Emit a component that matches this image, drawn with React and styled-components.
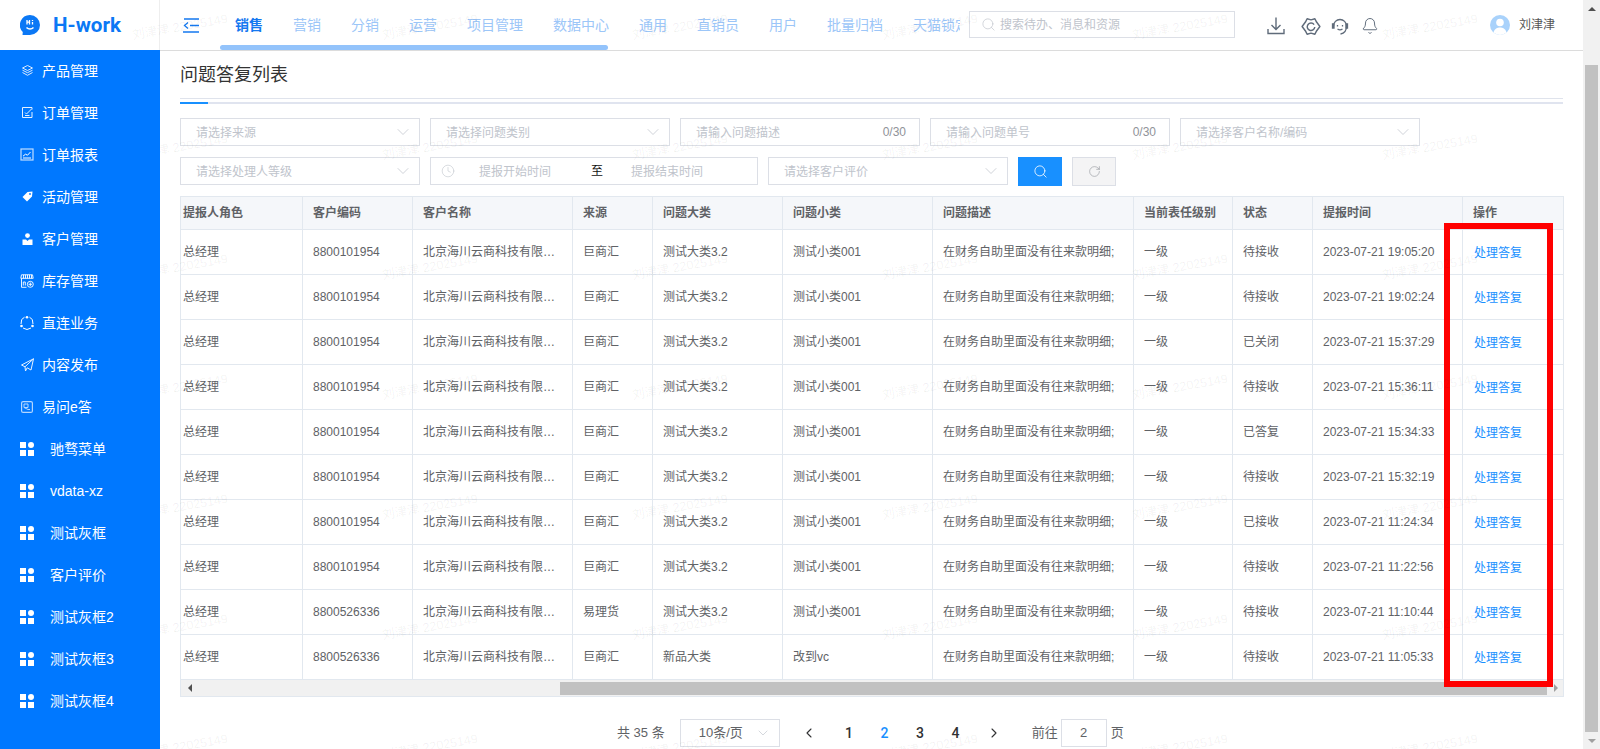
import React from 'react';
import styled, { createGlobalStyle } from 'styled-components';
import { Bell, Search, RotateCw, Clock, ChevronDown, ChevronLeft, ChevronRight } from 'lucide-react';

const GlobalStyle = createGlobalStyle`
  html, body {
    margin: 0;
    height: 100%;
    overflow: hidden;
    background: #fff;
    font-family: "Liberation Sans", "Noto Sans CJK SC", sans-serif;
    font-size: 12px;
    line-height: 16px;
    color: #606266;
  }
  * { box-sizing: border-box; }
`;

const Shell = styled.div`
  position: relative;
  display: flex;
  height: 749px;
  overflow: hidden;
`;

const Side = styled.aside`
  width: 160px;
  flex: none;
  display: flex;
  flex-direction: column;
`;

const Logo = styled.div`
  height: 50px;
  display: flex;
  align-items: center;
  padding-left: 20px;
  gap: 13px;
  background: #fff;
  color: #0b78f5;
  font: 700 20.6px Roboto, "Liberation Sans", sans-serif;
  box-shadow: inset -1px 0 0 #eee;
`;

const Menu = styled.nav`
  position: relative;
  z-index: 2;
  flex: 1;
  background: #0078ff;
`;

const MenuItem = styled.div`
  height: 42px;
  display: flex;
  align-items: center;
  padding: 0 0 1px 20px;
  color: #fff;
  font-size: 14px;
  span { margin-left: ${(p) => (p.$grid ? 16 : 8)}px; }
`;

const MenuIcon = styled.div`
  width: 14px;
  height: 14px;
  flex: none;
  display: flex;
  align-items: center;
  justify-content: center;
  opacity: ${(p) => p.$dim || 1};
`;

const Main = styled.div`
  flex: 1;
  min-width: 0;
  display: flex;
  flex-direction: column;
`;

const Header = styled.header`
  height: 51px;
  flex: none;
  display: flex;
  align-items: flex-start;
  padding-left: 23px;
  background: #fff;
  border-bottom: 1px solid #dcdcdc;
`;

const Collapse = styled.div`
  width: 16px;
  height: 50px;
  display: flex;
  align-items: center;
  margin-right: 21px;
`;

const TabsWrap = styled.div`
  width: 740px;
  flex: none;
`;

const TabRow = styled.div`
  height: 45px;
  display: flex;
  overflow: hidden;
  padding-top: 5px;
`;

const Tab = styled.div`
  flex: none;
  display: flex;
  align-items: center;
  padding: 0 15px;
  font-size: 14px;
  font-weight: ${(p) => (p.$active ? 700 : 400)};
  color: ${(p) => (p.$active ? '#1478f0' : '#9cc6f8')};
`;

const TabBar = styled.div`
  width: 388px;
  height: 5px;
  background: #93c3fb;
  border-radius: 3px;
`;

const HeaderSearch = styled.div`
  width: 266px;
  height: 27px;
  margin: 11px 0 0 9px;
  flex: none;
  display: flex;
  align-items: center;
  gap: 4px;
  padding-left: 11px;
  border: 1px solid #dcdfe6;
  color: #c0c4cc;
`;

const HeaderIcons = styled.div`
  height: 50px;
  display: flex;
  align-items: center;
  margin-left: 31px;
  padding-top: 2px;
  color: #5f6b7a;
`;

const HeaderIcon = styled.div`
  width: 20px;
  height: 20px;
  display: flex;
  align-items: center;
  justify-content: center;
  margin-left: ${(p) => p.$left || 0}px;
`;

const User = styled.div`
  height: 50px;
  display: flex;
  align-items: center;
  gap: 9px;
  margin-left: auto;
  padding-right: 28px;
  color: #555;
  white-space: nowrap;
`;

const Content = styled.main`
  flex: 1;
  padding: 0 20px;
`;

const TitleBar = styled.div`
  height: 48px;
  display: flex;
  align-items: center;
  border-bottom: 1px solid #dfe3ec;
  font-size: 18px;
  color: #333;
`;

const Rule = styled.div`
  height: 2px;
  margin-top: 3px;
  background: #e0e4ef;
  &::before {
    content: '';
    display: block;
    width: 28px;
    height: 2px;
    background: #1890ff;
  }
`;

const FilterRow = styled.div`
  display: flex;
  gap: 10px;
  margin-top: ${(p) => p.$top}px;
`;

const Field = styled.div`
  width: ${(p) => p.$width || 240}px;
  height: 28px;
  flex: none;
  display: flex;
  align-items: center;
  justify-content: space-between;
  padding: 0 13px 0 15px;
  border: 1px solid #dcdfe6;
  color: #c0c4cc;
  svg { color: #c0c4cc; }
`;

const FieldLabel = styled.span`
  margin-top: 2px;
`;

const FieldChevron = styled(ChevronDown)`
  margin-right: -7px;
`;

const Count = styled.span`
  color: #909399;
`;

const DateField = styled(Field)`
  justify-content: flex-start;
  padding: 0 0 0 10px;
`;

const DateHint = styled.span`
  width: 72px;
  margin: 2px 0 0 ${(p) => p.$left}px;
`;

const DateSep = styled.span`
  margin-left: 40px;
  color: #111;
`;

const IconButton = styled.button`
  width: 44px;
  height: 29px;
  flex: none;
  padding: 0;
  display: flex;
  align-items: center;
  justify-content: center;
  border: 1px solid ${(p) => (p.$primary ? '#1890ff' : '#dcdfe6')};
  background: ${(p) => (p.$primary ? '#1890ff' : '#f4f4f5')};
  color: ${(p) => (p.$primary ? '#fff' : '#909399')};
`;

const TableWrap = styled.div`
  position: relative;
  width: 1384px;
  margin-top: 10px;
  border-top: 1px solid #e2e8ef;
  border-left: 1px solid #e2e8ef;
`;

const Table = styled.table`
  width: 1383px;
  table-layout: fixed;
  border-collapse: separate;
  border-spacing: 0;
`;

const Th = styled.th`
  height: 33px;
  padding: 0 0 0 ${(p) => (p.$first ? 2 : 10)}px;
  text-align: left;
  font-weight: 700;
  color: #606266;
  background: #f5f7fa;
  border-right: 1px solid #e2e8ef;
  border-bottom: 1px solid #e2e8ef;
  white-space: nowrap;
`;

const Td = styled.td`
  height: 45px;
  padding: 0 10px 0 ${(p) => (p.$first ? 2 : 10)}px;
  color: #606266;
  border-right: 1px solid #e2e8ef;
  border-bottom: 1px solid #e2e8ef;
  white-space: nowrap;
  overflow: hidden;
  text-overflow: ellipsis;
`;

const ActionLink = styled.a`
  display: block;
  padding-left: 1px;
  margin-top: ${(p) => (p.$low ? 2 : 1)}px;
  color: #1890ff;
`;

const HBar = styled.div`
  height: 17px;
  display: flex;
  align-items: center;
  background: #f1f1f1;
  border-right: 1px solid #e2e8ef;
  border-bottom: 1px solid #e2e8ef;
  color: #505050;
`;

const opposite = { left: 'right', right: 'left', top: 'bottom', bottom: 'top' };

const Arrow = styled.div`
  width: 17px;
  flex: none;
  display: flex;
  justify-content: center;
  align-items: center;
  &::before {
    content: '';
    border: 4px solid transparent;
    ${(p) => `border-${p.$side}-color: ${p.$color || '#505050'};`}
    ${(p) => `border-${opposite[p.$side]}-width: 0;`}
  }
`;

const HTrack = styled.div`
  flex: 1;
  height: 13px;
`;

const HThumb = styled.div`
  width: 987px;
  height: 13px;
  margin-left: 362px;
  background: #c1c1c1;
`;

const RedBox = styled.div`
  position: absolute;
  top: 26px;
  left: 1263px;
  width: 109px;
  height: 464px;
  border: 6px solid #ff0000;
`;

const Pager = styled.div`
  display: flex;
  align-items: center;
  height: 28px;
  margin-top: 22px;
  padding-left: 437px;
  font-size: 13px;
  color: #606266;
`;

const PageSize = styled.div`
  width: 100px;
  height: 28px;
  margin-left: 15px;
  margin-right: 12px;
  display: flex;
  align-items: center;
  justify-content: space-between;
  padding: 0 8px 0 18px;
  border: 1px solid #dcdfe6;
  svg { color: #c0c4cc; }
`;

const PageBtn = styled.div`
  width: 35.5px;
  height: 28px;
  display: flex;
  align-items: center;
  justify-content: center;
  font: 500 14px Roboto, "Liberation Sans", sans-serif;
  color: ${(p) => (p.$active ? '#1890ff' : '#303133')};
`;

const PageArrow = styled(PageBtn)`
  margin: ${(p) => p.$margin};
`;

const Jump = styled.span`
  margin-left: ${(p) => p.$left}px;
`;

const JumpInput = styled.div`
  width: 46px;
  height: 28px;
  margin: 0 4px 0 3px;
  display: flex;
  align-items: center;
  justify-content: center;
  border: 1px solid #dcdfe6;
`;

const VBar = styled.div`
  width: 17px;
  flex: none;
  display: flex;
  flex-direction: column;
  align-items: center;
  background: #f1f1f1;
`;

const VArrow = styled(Arrow)`
  height: 17px;
`;

const VTrack = styled.div`
  flex: 1;
  width: 13px;
  padding-top: 48px;
`;

const VThumb = styled.div`
  height: 667px;
  background: #c1c1c1;
`;

const Watermarks = styled.div`
  position: absolute;
  z-index: 1;
  top: -33px;
  left: 55px;
  display: grid;
  grid-template-columns: repeat(6, 250px);
  grid-auto-rows: 120px;
  pointer-events: none;
`;

const Mark = styled.div`
  display: flex;
  align-items: center;
  justify-content: center;
  color: rgba(0, 0, 0, 0.06);
  font-size: 12.5px;
  white-space: nowrap;
  transform: rotate(-10deg);
`;

const GridIcon = () => (
  <svg width="14" height="14" viewBox="0 0 14 14" fill="#fff">
    <rect x="0" y="0" width="6" height="6" />
    <circle cx="11" cy="3" r="3" />
    <rect x="0" y="8" width="6" height="6" />
    <rect x="8" y="8" width="6" height="6" />
  </svg>
);

const line = { fill: 'none', stroke: '#fff', strokeWidth: 1 };

const menuItems = [
  {
    label: '产品管理',
    dim: 0.85,
    icon: (
      <svg width="11" height="11" viewBox="0 0 11 11" {...line}>
        <path d="M5.500 .5L10.500 3 5.500 5.500 .5 3z" />
        <path d="M.5 5.200l5 2.500 5-2.500M.5 7.500l5 2.800 5-2.800" />
      </svg>
    ),
  },
  {
    label: '订单管理',
    icon: (
      <svg width="11" height="11" viewBox="0 0 11 11" {...line} opacity="0.9">
        <path d="M10 2.500V.5H.5v10H10V5" />
        <path d="M3 5.500l1.500 1.500L9.500 2M3 8.500h4.500" />
      </svg>
    ),
  },
  {
    label: '订单报表',
    icon: (
      <svg width="14" height="13" viewBox="0 0 14 13" {...line}>
        <rect x="1" y="1" width="12" height="11" opacity="0.75" strokeWidth="1.2" />
        <path d="M3 8.200l2.500-2 2 1L10.500 4M3 10h8" />
      </svg>
    ),
  },
  {
    label: '活动管理',
    icon: (
      <svg width="11" height="11" viewBox="0 0 11 11" fill="#fff">
        <path d="M5.500 1L10.500.5 10 5.500 5 10.500 .5 6z" />
        <circle cx="8" cy="3" r="0.9" fill="#0078ff" />
      </svg>
    ),
  },
  {
    label: '客户管理',
    icon: (
      <svg width="11" height="12" viewBox="0 0 11 12" fill="#fff">
        <circle cx="5.500" cy="2.600" r="2.400" />
        <path d="M.5 6.500h3.500L5.500 8 7 6.500h3.500V12H.5z" />
      </svg>
    ),
  },
  {
    label: '库存管理',
    icon: (
      <svg width="14" height="14" viewBox="0 0 14 14" {...line} strokeWidth="0.9">
        <path d="M1.500 .8h11l.7 3.500H.8zM1.500 4.300v9h5M3.500 .8v3.500M5.500 .8v3.500M7.500 .8v3.500M9.500 .8v3.500M11.500 .8v3.500" />
        <path d="M3.300 11.500V8h2v3.500" />
        <circle cx="10.300" cy="10.300" r="3" />
        <path d="M8.500 10.300h3.600M10.300 8.500v3.600" />
      </svg>
    ),
  },
  {
    label: '直连业务',
    icon: (
      <svg width="14" height="14" viewBox="0 0 14 14" {...line}>
        <path d="M4.500 1.200L1.700 3.500 1 8" />
        <path d="M9.500 1.200L12.300 3.500 13 8" />
        <path d="M3 12l4 1.500 4-1.500" />
        <g fill="#fff" stroke="none">
          <circle cx="7" cy="1.300" r="1.300" />
          <circle cx="1.500" cy="10" r="1.300" />
          <circle cx="12.500" cy="10" r="1.300" />
        </g>
      </svg>
    ),
  },
  {
    label: '内容发布',
    icon: (
      <svg width="13" height="14" viewBox="0 0 13 14" {...line} opacity="0.9">
        <path d="M12.500 .8L.5 7l3.500 1.800L12.500 .8 10 12 6.200 9.800 4.500 13 4 8.800" />
      </svg>
    ),
  },
  {
    label: '易问e答',
    dim: 0.7,
    icon: (
      <svg width="12" height="12" viewBox="0 0 12 12" {...line}>
        <rect x="0.6" y="0.6" width="10.800" height="10.800" rx="1.500" strokeWidth="1.200" />
        <path d="M3 3h4v3.500H3zM3 6.500l4 2h2" />
      </svg>
    ),
  },
  { label: '驰骛菜单', grid: true },
  { label: 'vdata-xz', grid: true },
  { label: '测试灰框', grid: true },
  { label: '客户评价', grid: true },
  { label: '测试灰框2', grid: true },
  { label: '测试灰框3', grid: true },
  { label: '测试灰框4', grid: true },
];

const tabs = ['销售', '营销', '分销', '运营', '项目管理', '数据中心', '通用', '直销员', '用户', '批量归档', '天猫锁定'];

const columns = [
  ['提报人角色', 122], ['客户编码', 110], ['客户名称', 160], ['来源', 80], ['问题大类', 130], ['问题小类', 150],
  ['问题描述', 201], ['当前表任级别', 99], ['状态', 80], ['提报时间', 150], ['操作', 101],
];

const rows = [
  ['8800101954', '巨商汇', '测试大类3.2', '测试小类001', '待接收', '2023-07-21 19:05:20'],
  ['8800101954', '巨商汇', '测试大类3.2', '测试小类001', '待接收', '2023-07-21 19:02:24'],
  ['8800101954', '巨商汇', '测试大类3.2', '测试小类001', '已关闭', '2023-07-21 15:37:29'],
  ['8800101954', '巨商汇', '测试大类3.2', '测试小类001', '待接收', '2023-07-21 15:36:11'],
  ['8800101954', '巨商汇', '测试大类3.2', '测试小类001', '已答复', '2023-07-21 15:34:33'],
  ['8800101954', '巨商汇', '测试大类3.2', '测试小类001', '待接收', '2023-07-21 15:32:19'],
  ['8800101954', '巨商汇', '测试大类3.2', '测试小类001', '已接收', '2023-07-21 11:24:34'],
  ['8800101954', '巨商汇', '测试大类3.2', '测试小类001', '待接收', '2023-07-21 11:22:56'],
  ['8800526336', '易理货', '测试大类3.2', '测试小类001', '待接收', '2023-07-21 11:10:44'],
  ['8800526336', '巨商汇', '新品大类', '改到vc', '待接收', '2023-07-21 11:05:33'],
];

const Select = ({ label }) => (
  <Field>
    <FieldLabel>{label}</FieldLabel>
    <FieldChevron size={20} strokeWidth={0.9} />
  </Field>
);

const CountInput = ({ label }) => (
  <Field>
    <FieldLabel>{label}</FieldLabel>
    <Count>0/30</Count>
  </Field>
);

const App = () => (
  <Shell>
    <GlobalStyle />
    <Side>
      <Logo>
        <svg width="20" height="21" viewBox="0 0 20 21">
          <path d="M10 0a10 10 0 0 1 0 20H2.500l.3-3A10 10 0 0 1 10 0z" fill="#0b78f5" />
          <path d="M7 5v4.500M9.500 5v4.500M7 7.200h2.500M12.500 5v1M12.500 7v2.500" stroke="#fff" strokeWidth="1.300" fill="none" />
          <path d="M6.500 12.500c2 2 5 2 7 0" stroke="#fff" strokeWidth="1.500" fill="none" />
        </svg>
        H-work
      </Logo>
      <Menu>
        {menuItems.map((item) => (
          <MenuItem key={item.label} $grid={item.grid}>
            <MenuIcon $dim={item.dim}>{item.grid ? <GridIcon /> : item.icon}</MenuIcon>
            <span>{item.label}</span>
          </MenuItem>
        ))}
      </Menu>
    </Side>

    <Main>
      <Header>
        <Collapse>
          <svg width="16" height="15" viewBox="0 0 16 15" fill="none" stroke="#1478f0" strokeWidth="1.300">
            <path d="M1 1h15M7 7.500h9M0 14h16M5 4.500L1.500 7.500 5 10.500" />
          </svg>
        </Collapse>
        <TabsWrap>
          <TabRow>
            {tabs.map((tab, i) => (
              <Tab key={tab} $active={i === 0}>{tab}</Tab>
            ))}
          </TabRow>
          <TabBar />
        </TabsWrap>
        <HeaderSearch>
          <Search size={15} strokeWidth={1.1} />
          搜索待办、消息和资源
        </HeaderSearch>
        <HeaderIcons>
          <HeaderIcon>
            <svg width="18" height="18" viewBox="0 0 18 18" fill="none" stroke="currentColor" strokeWidth="1.400">
              <path d="M9 .5v12M4.500 8L9 12.500 13.500 8M1 12v4.500h16V12" />
            </svg>
          </HeaderIcon>
          <HeaderIcon $left={15}>
            <svg width="20" height="19" viewBox="0 0 18 17" fill="none" stroke="currentColor" strokeWidth="1.300" strokeLinejoin="round">
              <path d="M5.500 1.500l3.500 1 3.500-1 1.500 3 3 4-3 4-1.500 3-3.500-1-3.500 1-1.500-3-3-4 3-4z" />
              <path d="M11.800 6.800A3.400 3.400 0 1 0 12.400 9" />
            </svg>
          </HeaderIcon>
          <HeaderIcon $left={9}>
            <svg width="18" height="17" viewBox="0 0 18 17" fill="none" stroke="currentColor" strokeWidth="1.300">
              <path d="M2.500 8a6.500 6.500 0 0 1 13 0c0 4.500-2.500 7.500-6 8" />
              <path d="M3 6H1.500v4H3zM15 6h1.500v4H15z" fill="currentColor" />
              <path d="M6.500 7v1.500M11.500 7v1.500M6.500 11c1.500 1 3.500 1 5 0" />
            </svg>
          </HeaderIcon>
          <HeaderIcon $left={10}><Bell size={18} strokeWidth={1.3} /></HeaderIcon>
        </HeaderIcons>
        <User>
          <svg width="20" height="20" viewBox="0 0 20 20">
            <circle cx="10" cy="10" r="10" fill="#a9d2fb" />
            <circle cx="10" cy="7.500" r="3.800" fill="#fff" />
            <path d="M3.500 17.500c1-4 4-5 6.500-5s5.500 1 6.500 5A10 10 0 0 1 3.500 17.500z" fill="#fff" />
          </svg>
          刘津津
        </User>
      </Header>

      <Content>
        <TitleBar>问题答复列表</TitleBar>
        <Rule />
        <FilterRow $top={14}>
          <Select label="请选择来源" />
          <Select label="请选择问题类别" />
          <CountInput label="请输入问题描述" />
          <CountInput label="请输入问题单号" />
          <Select label="请选择客户名称/编码" />
        </FilterRow>
        <FilterRow $top={11}>
          <Select label="请选择处理人等级" />
          <DateField $width={328}>
            <Clock size={14} strokeWidth={1} />
            <DateHint $left={24}>提报开始时间</DateHint>
            <DateSep>至</DateSep>
            <DateHint $left={28}>提报结束时间</DateHint>
          </DateField>
          <Select label="请选择客户评价" />
          <IconButton $primary><Search size={15} strokeWidth={1.3} /></IconButton>
          <IconButton><RotateCw size={13} strokeWidth={1.1} /></IconButton>
        </FilterRow>

        <TableWrap>
          <Table>
            <colgroup>
              {columns.map(([name, width]) => <col key={name} width={width} />)}
            </colgroup>
            <thead>
              <tr>
                {columns.map(([name], i) => <Th key={name} $first={i === 0}>{name}</Th>)}
              </tr>
            </thead>
            <tbody>
              {rows.map((row, i) => (
                <tr key={row[5]}>
                  <Td $first>总经理</Td>
                  <Td>{row[0]}</Td>
                  <Td>北京海川云商科技有限公司</Td>
                  <Td>{row[1]}</Td>
                  <Td>{row[2]}</Td>
                  <Td>{row[3]}</Td>
                  <Td>在财务自助里面没有往来款明细;</Td>
                  <Td>一级</Td>
                  <Td>{row[4]}</Td>
                  <Td>{row[5]}</Td>
                  <Td><ActionLink $low={i > 0}>处理答复</ActionLink></Td>
                </tr>
              ))}
            </tbody>
          </Table>
          <HBar>
            <Arrow $side="right" />
            <HTrack><HThumb /></HTrack>
            <Arrow $side="left" $color="#a0a0a0" />
          </HBar>
          <RedBox />
        </TableWrap>

        <Pager>
          共 35 条
          <PageSize>
            10条/页
            <ChevronDown size={16} strokeWidth={1} />
          </PageSize>
          <PageArrow $margin="0 4px 0 0"><ChevronLeft size={16} strokeWidth={1.6} /></PageArrow>
          <PageBtn>1</PageBtn>
          <PageBtn $active>2</PageBtn>
          <PageBtn>3</PageBtn>
          <PageBtn>4</PageBtn>
          <PageArrow $margin="0 0 0 3px"><ChevronRight size={16} strokeWidth={1.6} /></PageArrow>
          <Jump $left={20}>前往</Jump>
          <JumpInput>2</JumpInput>
          <Jump $left={0}>页</Jump>
        </Pager>
      </Content>
    </Main>

    <VBar>
      <VArrow $side="bottom" />
      <VTrack><VThumb /></VTrack>
      <VArrow $side="top" $color="#a0a0a0" />
    </VBar>

    <Watermarks>
      {Array.from({ length: 42 }, (_, i) => <Mark key={i}>刘津津 22025149</Mark>)}
    </Watermarks>
  </Shell>
);

export default App;
